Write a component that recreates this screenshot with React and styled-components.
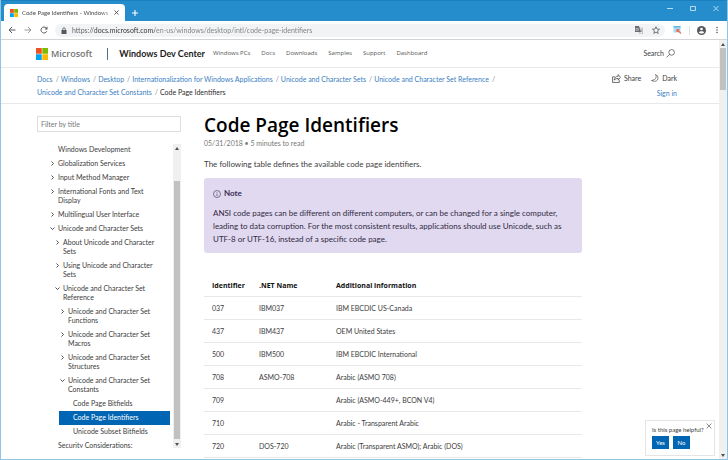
import React from 'react';
import styled, { createGlobalStyle, css } from 'styled-components';

const GlobalStyle = createGlobalStyle`
  * { box-sizing: border-box; }
  body { margin: 0; background: #fff; }
  button, input { font: inherit; }
  button { border: 0; padding: 0; background: none; color: inherit; display: grid; place-items: center; }
  a { color: inherit; text-decoration: none; }
`;

const Window = styled.div`
  height: 100vh;
  display: flex;
  flex-direction: column;
  overflow: hidden;
  border: 1px solid #8cc6e4;
  border-top: 0;
  font-family: Lato, 'Open Sans', sans-serif;
  font-size: 7px;
  line-height: 9px;
  color: #3c3c3c;
`;

/* Browser chrome */
const TitleBar = styled.div`
  flex: none;
  display: flex;
  align-items: flex-end;
  height: 21px;
  padding: 0 0 0 3px;
  border-top: 1px solid #1c80bd;
  background: #268dcc;
  color: #fff;
`;
const Tab = styled.div`
  display: flex;
  align-items: center;
  width: 121px;
  height: 17px;
  padding: 0 6px 0 6px;
  border-radius: 4px 4px 0 0;
  background: #fff;
  color: #45494d;
`;
const TabTitle = styled.span`
  flex: 1;
  margin-left: 4px;
  overflow: hidden;
  white-space: nowrap;
  font-size: 6px;
  mask-image: linear-gradient(to right, #000 85%, transparent);
`;
const NewTab = styled.button`
  width: 20px;
  height: 17px;
`;
const WindowControls = styled.div`
  display: flex;
  align-self: flex-start;
  gap: 15px;
  margin-left: auto;
  padding: 2px 7px 0 0;
  color: #b5dcf2;
`;
const Toolbar = styled.div`
  flex: none;
  display: flex;
  align-items: center;
  height: 19px;
  padding: 0 6px 0 7px;
  border-bottom: 1px solid #d2d4d6;
  background: #fff;
  color: #55595d;
`;
const NavButtons = styled.div`
  display: flex;
  gap: 8px;
  margin-right: 7px;
`;
const AddressBar = styled.div`
  flex: 1;
  display: flex;
  align-items: center;
  height: 13px;
  padding: 0 5px 0 6px;
  border-radius: 7px;
  background: #f1f3f4;
`;
const AddressInput = styled.input`
  flex: 1;
  min-width: 0;
  margin-left: 5px;
  padding: 0;
  border: 0;
  outline: 0;
  background: linear-gradient(to right, #5c6063 23px, #2f3336 23px 83px, #7c8083 83px);
  background-clip: text;
  -webkit-text-fill-color: transparent;
  color: #7c8083;
`;
const IconGroup = styled.div`
  display: flex;
  align-items: center;
  gap: ${p => p.$gap}px;
`;
const ToolbarEnd = styled(IconGroup)`
  margin-left: 8px;
`;
const Divider = styled.span`
  width: 1px;
  height: 9px;
  background: #dcdee0;
`;

/* Page */
const Viewport = styled.div`
  flex: 1;
  min-height: 0;
  display: flex;
  position: relative;
`;
const Page = styled.div`
  flex: 1;
  min-width: 0;
  overflow: hidden;
`;
const Scrollbar = styled.div`
  flex: none;
  display: flex;
  flex-direction: column;
  align-items: center;
  width: 8px;
  background: #f0f0f0;
  color: #505050;
`;
const ScrollArrow = styled.button`
  width: 8px;
  height: 8px;
`;
const ScrollTrack = styled.div`
  flex: 1;
  display: grid;
  grid-template-rows: ${p => p.$rows};
  width: 6px;
`;
const ScrollThumb = styled.div`
  grid-row: 2;
  background: #c1c1c1;
`;
const Header = styled.header`
  display: flex;
  align-items: center;
  height: 28px;
  padding: 0 44px 0 35px;
  border-bottom: 1px solid #e8e8e8;
`;
const Brand = styled.a`
  display: flex;
  align-items: center;
  gap: 3px;
  color: #737373;
  font: 600 9px/12px 'Open Sans', sans-serif;
`;
const BrandRule = styled.span`
  width: 1px;
  height: 12px;
  margin: 0 11px 0 15px;
  background: #50708c;
`;
const SiteName = styled.a`
  margin-right: 8px;
  color: #1c1c1c;
  font-size: 9px;
  font-weight: 700;
  line-height: 12px;
`;
const SiteNav = styled.nav`
  display: flex;
  gap: 11px;
  color: #555;
  font-family: 'Open Sans', sans-serif;
  font-size: 6px;
`;
const SearchButton = styled.button`
  display: flex;
  align-items: center;
  gap: 2px;
  margin-left: auto;
`;
const SubHeader = styled.div`
  display: flex;
  justify-content: space-between;
  height: 36px;
  padding: 5px 42px 0 36px;
  border-bottom: 1px solid #e8e8e8;
`;
const Crumbs = styled.ol`
  flex: 0 1 470px;
  margin: 0;
  padding: 0;
  list-style: none;
  line-height: 13px;
`;
const Crumb = styled.li`
  display: inline;
  color: ${p => (p.$current ? '#2c2c2c' : '#3a80bf')};
`;
const Slash = styled.span`
  margin: 0 2px 0 3px;
  color: #8c8c8c;
`;
const Actions = styled.div`
  display: flex;
  flex-direction: column;
  align-items: flex-end;
  gap: 6px;
`;
const ActionButton = styled.button`
  display: flex;
  align-items: center;
  gap: 3px;
  height: 10px;
`;
const SignIn = styled.a`
  color: #3a80bf;
`;
const Columns = styled.div`
  display: grid;
  grid-template-columns: 144px minmax(0, 1fr) 73px;
  column-gap: 23px;
  padding: 12px 41px 0 36px;
`;
const FilterInput = styled.input`
  display: block;
  width: 100%;
  height: 16px;
  padding: 0 3px;
  border: 1px solid #dedede;
  outline: 0;
  &::placeholder { color: #777; opacity: 1; }
`;
const TreePane = styled.div`
  display: flex;
  height: calc(100vh - 156px);
  max-height: 304px;
  margin-top: 12px;
`;
const Tree = styled.ul`
  flex: 1;
  min-width: 0;
  margin: 0;
  padding: 0 3px 0 22px;
  overflow: hidden;
  list-style: none;
`;
const TreeItem = styled.li`
  margin: 0;
  ${p => p.$selected && css`background: #0065b3; color: #fff;`}
`;
const TreeLink = styled.a`
  display: flex;
  gap: 4px;
  margin-left: -9px;
  padding: ${p => (p.$first ? 1 : 2)}px 8px 3px ${p => p.$level * 5}px;
`;
const Caret = styled.span`
  flex: none;
  display: grid;
  place-items: center;
  width: 4px;
  height: 9px;
`;
const Article = styled.main`
  padding-bottom: 8px;
  h1 {
    margin: -4px 0 0;
    color: #000;
    font: 600 19px/26px 'Open Sans', sans-serif;
  }
`;
const Meta = styled.p`
  margin: 0;
  color: #777;
  line-height: 11px;
`;
const Intro = styled.p`
  margin: 9px 0 8px;
  font-size: 8px;
  line-height: 12px;
`;
const Note = styled.section`
  padding: 9px 12px 7px 9px;
  border-radius: 3px;
  background: #e1d9f0;
  color: #302a42;
  font-size: 8px;
  line-height: 13px;
  p { margin: 7px 0 0; }
`;
const NoteTitle = styled.div`
  display: flex;
  align-items: center;
  gap: 3px;
  color: #3b2e58;
  font-weight: 700;
`;
const CodeTable = styled.table`
  width: 100%;
  margin-top: 20px;
  border-collapse: collapse;
  table-layout: fixed;
  th, td {
    height: 23px;
    padding: 2px 8px 0;
    border-bottom: 1px solid #e8e8e8;
    text-align: left;
  }
  th { color: #111; font-family: 'Open Sans', sans-serif; font-weight: 700; }
  th:nth-child(1) { width: 47px; }
  th:nth-child(2) { width: 77px; }
`;
const Helpful = styled.div`
  position: absolute;
  right: 12px;
  bottom: 3px;
  width: 70px;
  height: 36px;
  padding: 5px 6px;
  border: 1px solid #e4e4e4;
  background: #fff;
  font-size: 6px;
  line-height: 8px;
`;
const CloseHelpful = styled.button`
  position: absolute;
  top: 1px;
  right: 2px;
  width: 7px;
  height: 7px;
`;
const Answers = styled.div`
  display: flex;
  gap: 4px;
  margin-top: 2px;
`;
const AnswerButton = styled.button`
  width: 17px;
  height: 13px;
  background: #0065b3;
  color: #fff;
`;

/* Icons */
const Line = ({ size = 8, w = 1, vb = 16, children }) => (
  <svg width={size} height={size} viewBox={`0 0 ${vb} ${vb}`} fill="none" stroke="currentColor" strokeWidth={w} aria-hidden="true">{children}</svg>
);
const MsLogo = ({ size }) => (
  <svg width={size} height={size} viewBox="0 0 23 23" aria-hidden="true">
    <path fill="#f25022" d="M0 0h11v11H0z" /><path fill="#7fba00" d="M12 0h11v11H12z" />
    <path fill="#00a4ef" d="M0 12h11v11H0z" /><path fill="#ffb900" d="M12 12h11v11H12z" />
  </svg>
);
const Close = ({ size = 6, w = 1.6 }) => <Line size={size} w={w} vb={10}><path d="M1 1l8 8M9 1L1 9" /></Line>;
const Triangle = ({ up }) => (
  <svg width="4" height="3" viewBox="0 0 4 3" fill="currentColor" aria-hidden="true"><path d={up ? 'M0 3l2-3 2 3z' : 'M0 0l2 3 2-3z'} /></svg>
);
const Chevron = ({ open }) => (
  <Line size={5} w={1.8} vb={10}><path d={open ? 'M1 3l4 4 4-4' : 'M3 1l4 4-4 4'} /></Line>
);

const nav = ['Windows PCs', 'Docs', 'Downloads', 'Samples', 'Support', 'Dashboard'];
const crumbs = ['Docs', 'Windows', 'Desktop', 'Internationalization for Windows Applications', 'Unicode and Character Sets', 'Unicode and Character Set Reference', 'Unicode and Character Set Constants'];
const tree = [
  ['Windows Development', 0, null],
  ['Globalization Services', 0, false],
  ['Input Method Manager', 0, false],
  ['International Fonts and Text Display', 0, false],
  ['Multilingual User Interface', 0, false],
  ['Unicode and Character Sets', 0, true],
  ['About Unicode and Character Sets', 1, false],
  ['Using Unicode and Character Sets', 1, false],
  ['Unicode and Character Set Reference', 1, true],
  ['Unicode and Character Set Functions', 2, false],
  ['Unicode and Character Set Macros', 2, false],
  ['Unicode and Character Set Structures', 2, false],
  ['Unicode and Character Set Constants', 2, true],
  ['Code Page Bitfields', 3, null],
  ['Code Page Identifiers', 3, null],
  ['Unicode Subset Bitfields', 3, null],
  ['Security Considerations:', 0, null],
];
const rows = [
  ['037', 'IBM037', 'IBM EBCDIC US-Canada'],
  ['437', 'IBM437', 'OEM United States'],
  ['500', 'IBM500', 'IBM EBCDIC International'],
  ['708', 'ASMO-708', 'Arabic (ASMO 708)'],
  ['709', '', 'Arabic (ASMO-449+, BCON V4)'],
  ['710', '', 'Arabic - Transparent Arabic'],
  ['720', 'DOS-720', 'Arabic (Transparent ASMO); Arabic (DOS)'],
];

function BrowserChrome() {
  return (
    <>
      <TitleBar>
        <Tab>
          <MsLogo size={8} />
          <TabTitle>Code Page Identifiers - Windows</TabTitle>
          <button aria-label="Close tab"><Close size={5} w={1.8} /></button>
        </Tab>
        <NewTab aria-label="New tab"><Line size={6} w={1.8} vb={10}><path d="M5 0v10M0 5h10" /></Line></NewTab>
        <WindowControls>
          <button aria-label="Minimize"><Line size={8} vb={8}><path d="M1 5.500h6" /></Line></button>
          <button aria-label="Maximize"><Line size={8} vb={8}><path d="M1.500 3.500h5v4h-5z" /></Line></button>
          <button aria-label="Close"><Line size={8} vb={8}><path d="M1.500 3l5 5M6.500 3l-5 5" /></Line></button>
        </WindowControls>
      </TitleBar>
      <Toolbar>
        <NavButtons>
          <button aria-label="Back"><Line w={2}><path d="M15 8H2M8 2L2 8l6 6" /></Line></button>
          <button aria-label="Forward"><Line w={1.2}><path d="M1 8h13M8 2l6 6-6 6" /></Line></button>
          <button aria-label="Reload"><Line w={2}><path d="M13.500 10.500A6 6 0 1 1 12.500 4" /><path fill="currentColor" stroke="none" d="M15 1v6H9z" /></Line></button>
        </NavButtons>
        <AddressBar>
          <svg width="6" height="7" viewBox="0 0 12 14" aria-hidden="true"><path fill="#55595d" d="M1 6h10v8H1z" /><path fill="none" stroke="#55595d" strokeWidth="1.6" d="M3.500 6V4a2.500 2.500 0 0 1 5 0v2" /></svg>
          <AddressInput type="text" aria-label="Address" defaultValue="https://docs.microsoft.com/en-us/windows/desktop/intl/code-page-identifiers" />
          <IconGroup $gap={9}>
            <button aria-label="Translate">
              <svg width="8" height="8" viewBox="0 0 16 16" aria-hidden="true">
                <path fill="#fff" stroke="#8b8f92" d="M6 4.500h9.500v11H9z" /><path fill="#686c70" d="M0 0h8l4 12H0z" />
                <path fill="none" stroke="#fff" d="M7 5H4.500a2 2 0 1 0 0 3.500H7V7H5" /><path fill="none" stroke="#686c70" d="M10 8h5M12.500 7v1M14 8q-1 3-3 5M11.500 10l3 3" />
              </svg>
            </button>
            <button aria-label="Bookmark this page"><Line w={1.6}><path d="M8 1.500l2 4.500 5 .5-3.800 3.200L12.300 15 8 12.200 3.700 15l1.100-5.300L1 6.500 6 6z" /></Line></button>
          </IconGroup>
        </AddressBar>
        <ToolbarEnd $gap={7}>
          <button aria-label="Extension">
            <svg width="9" height="8" viewBox="0 0 18 16" aria-hidden="true"><path fill="#a9daf3" d="M1 0h14v13H1z" /><path fill="#62b6e4" d="M1 0h14v3H1z" /><path fill="none" stroke="#e96f5a" strokeWidth="2.400" d="M8 7l8 8M8 12V7h5" /></svg>
          </button>
          <Divider />
          <button aria-label="Profile">
            <svg width="9" height="9" viewBox="0 0 18 18" aria-hidden="true"><circle cx="9" cy="9" r="9" fill="#55595d" /><circle cx="9" cy="6" r="2.700" fill="#fff" /><path fill="#fff" d="M3.500 12.500C5 9.500 13 9.500 14.500 12.500 12.500 16 5.500 16 3.500 12.500z" /></svg>
          </button>
          <button aria-label="Menu">
            <svg width="8" height="8" viewBox="0 0 16 16" fill="#55595d" aria-hidden="true"><circle cx="8" cy="3" r="1.600" /><circle cx="8" cy="8" r="1.600" /><circle cx="8" cy="13" r="1.600" /></svg>
          </button>
        </ToolbarEnd>
      </Toolbar>
    </>
  );
}

function Bar({ rows: trackRows }) {
  return (
    <Scrollbar>
      <ScrollArrow aria-label="Scroll up"><Triangle up /></ScrollArrow>
      <ScrollTrack $rows={trackRows}><ScrollThumb /></ScrollTrack>
      <ScrollArrow aria-label="Scroll down"><Triangle /></ScrollArrow>
    </Scrollbar>
  );
}

function Sidebar() {
  return (
    <aside>
      <FilterInput type="text" placeholder="Filter by title" aria-label="Filter by title" />
      <TreePane>
        <Tree>
          {tree.map(([label, level, open], i) => (
            <TreeItem key={label} $selected={label === 'Code Page Identifiers'}>
              <TreeLink href="#" $level={level} $first={i === 0}>
                <Caret>{open !== null && <Chevron open={open} />}</Caret>
                <span>{label}</span>
              </TreeLink>
            </TreeItem>
          ))}
        </Tree>
        <Bar rows="29fr 258fr 1fr" />
      </TreePane>
    </aside>
  );
}

export default function App() {
  return (
    <Window>
      <GlobalStyle />
      <BrowserChrome />
      <Viewport>
        <Page>
          <Header>
            <Brand href="#"><MsLogo size={12} />Microsoft</Brand>
            <BrandRule />
            <SiteName href="#">Windows Dev Center</SiteName>
            <SiteNav>{nav.map(n => <a key={n} href="#">{n}</a>)}</SiteNav>
            <SearchButton>Search <Line size={9} w={1.2}><circle cx="10" cy="6" r="5" /><path d="M6.500 9.500L1 15" /></Line></SearchButton>
          </Header>
          <SubHeader>
            <Crumbs>
              {crumbs.map(c => (
                <Crumb key={c}><a href="#">{c}</a><Slash>/</Slash><wbr /></Crumb>
              ))}
              <Crumb $current>Code Page Identifiers</Crumb>
            </Crumbs>
            <Actions>
              <IconGroup $gap={10}>
                <ActionButton><Line size={9} w={1.3}><path d="M5 5H1v10h12v-4M4 11c0-5 3-7 7-7V1l4 5-4 5V8c-3 0-5 0-7 3z" /></Line>Share</ActionButton>
                <ActionButton><Line size={8} w={1.3}><path d="M9 1c3 5 1 11-8 12 5 3 13 2 13-5 0-3-2-6-5-7z" /></Line>Dark</ActionButton>
              </IconGroup>
              <SignIn href="#">Sign in</SignIn>
            </Actions>
          </SubHeader>
          <Columns>
            <Sidebar />
            <Article>
              <h1>Code Page Identifiers</h1>
              <Meta>05/31/2018 • 5 minutes to read</Meta>
              <Intro>The following table defines the available code page identifiers.</Intro>
              <Note>
                <NoteTitle><Line size={8} w={1.2}><circle cx="8" cy="8" r="7" /><path d="M8 4v1.500M8 7v5" /></Line>Note</NoteTitle>
                <p>ANSI code pages can be different on different computers, or can be changed for a single computer, leading to data corruption. For the most consistent results, applications should use Unicode, such as UTF-8 or UTF-16, instead of a specific code page.</p>
              </Note>
              <CodeTable>
                <thead><tr><th>Identifier</th><th>.NET Name</th><th>Additional information</th></tr></thead>
                <tbody>{rows.map(r => <tr key={r[0]}>{r.map((c, i) => <td key={i}>{c}</td>)}</tr>)}</tbody>
              </CodeTable>
            </Article>
          </Columns>
        </Page>
        <Bar rows="0fr 42fr 361fr" />
        <Helpful>
          Is this page helpful?
          <CloseHelpful aria-label="Close"><Close size={6} w={1} /></CloseHelpful>
          <Answers><AnswerButton>Yes</AnswerButton><AnswerButton>No</AnswerButton></Answers>
        </Helpful>
      </Viewport>
    </Window>
  );
}
